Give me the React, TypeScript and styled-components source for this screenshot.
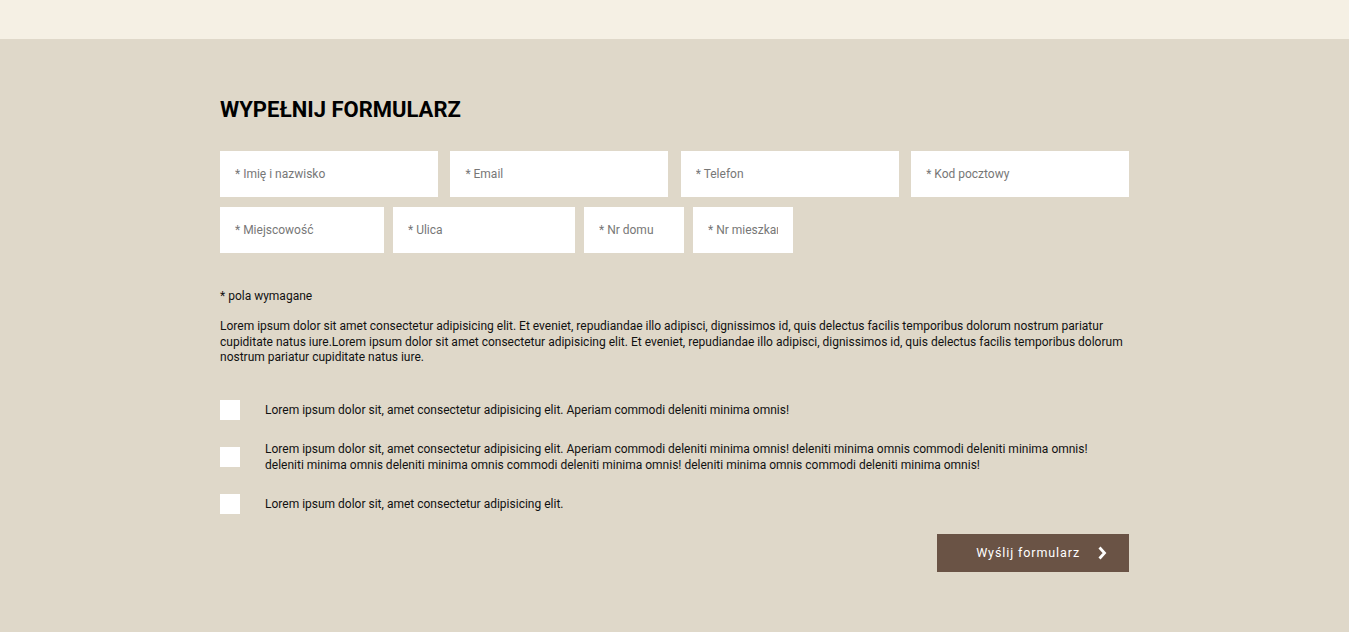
import styled, { createGlobalStyle } from "styled-components";

const GlobalStyle = createGlobalStyle`
	body {
		margin: 0;
		font-family: Roboto, "Liberation Sans", sans-serif;
		background-color: #dfd8c9;
		color: #111;
	}
	* {
		box-sizing: border-box;
	}
`;

const TopBar = styled.div`
	height: 39px;
	background-color: #f5f0e4;
`;

const Section = styled.section`
	background-color: #dfd8c9;
	min-height: 593px;
	padding-top: 58px;
`;

const Container = styled.form`
	width: 909px;
	margin: 0 auto;
`;

const Title = styled.h2`
	margin: 0 0 28px;
	font-size: 22px;
	font-weight: 700;
	line-height: 26px;
	color: #000;
`;

const Fields = styled.div<{ $cols: string; $gap: number }>`
	display: grid;
	grid-template-columns: ${props => props.$cols};
	column-gap: ${props => props.$gap}px;
	margin-bottom: 10px;
`;

const Input = styled.input`
	height: 46px;
	width: 100%;
	border: none;
	outline: none;
	background: #fff;
	padding: 0 15px;
	font-family: Roboto, "Liberation Sans", sans-serif;
	font-size: 12px;
	color: #333;
	&::placeholder {
		color: #777;
	}
`;

const Required = styled.p`
	margin: 35px 0 0;
	font-size: 12px;
	line-height: 16px;
`;

const Lead = styled.p`
	margin: 15px 0 0;
	font-size: 12px;
	line-height: 15.5px;
	padding-right: 4px;
`;

const Consents = styled.div`
	display: flex;
	flex-direction: column;
	gap: 21px;
	margin-top: 34px;
`;

const Consent = styled.label`
	display: flex;
	align-items: center;
	gap: 25px;
	font-size: 12px;
	line-height: 16px;
`;

const Box = styled.span`
	flex: 0 0 20px;
	width: 20px;
	height: 20px;
	background: #fff;
`;

const Actions = styled.div`
	display: flex;
	justify-content: flex-end;
	margin-top: 20px;
`;

const SubmitButton = styled.button`
	display: flex;
	align-items: center;
	justify-content: flex-end;
	gap: 17px;
	width: 192px;
	height: 38px;
	padding: 0 22px 0 0;
	border: none;
	background-color: #6a5345;
	color: #fff;
	font-family: Roboto, "Liberation Sans", sans-serif;
	font-size: 12.5px;
	font-weight: 400;
	letter-spacing: 0.9px;
	cursor: pointer;
`;

const consents = [
	"Lorem ipsum dolor sit, amet consectetur adipisicing elit. Aperiam commodi deleniti minima omnis!",
	"Lorem ipsum dolor sit, amet consectetur adipisicing elit. Aperiam commodi deleniti minima omnis! deleniti minima omnis commodi deleniti minima omnis! deleniti minima omnis deleniti minima omnis commodi deleniti minima omnis! deleniti minima omnis commodi deleniti minima omnis!",
	"Lorem ipsum dolor sit, amet consectetur adipisicing elit.",
];

function App() {
	return (
		<>
			<GlobalStyle />
			<TopBar />
			<Section>
				<Container onSubmit={e => e.preventDefault()}>
					<Title>WYPEŁNIJ FORMULARZ</Title>
					<Fields $cols="repeat(4, 1fr)" $gap={12.5}>
						<Input placeholder="* Imię i nazwisko" />
						<Input placeholder="* Email" />
						<Input placeholder="* Telefon" />
						<Input placeholder="* Kod pocztowy" />
					</Fields>
					<Fields $cols="164px 182px 100px 100px" $gap={9}>
						<Input placeholder="* Miejscowość" />
						<Input placeholder="* Ulica" />
						<Input placeholder="* Nr domu" />
						<Input placeholder="* Nr mieszkania" />
					</Fields>
					<Required>* pola wymagane</Required>
					<Lead>
						Lorem ipsum dolor sit amet consectetur adipisicing elit. Et eveniet, repudiandae illo adipisci, dignissimos id, quis delectus facilis temporibus dolorum nostrum pariatur
						cupiditate natus iure.Lorem ipsum dolor sit amet consectetur adipisicing elit. Et eveniet, repudiandae illo adipisci, dignissimos id, quis delectus facilis temporibus dolorum
						nostrum pariatur cupiditate natus iure.
					</Lead>
					<Consents>
						{consents.map((text, i) => (
							<Consent key={i}>
								<Box />
								<span>{text}</span>
							</Consent>
						))}
					</Consents>
					<Actions>
						<SubmitButton type="submit">
							Wyślij formularz
							<svg width="10" height="14" viewBox="0 0 10 14">
								<path d="M2.5 1.5 L7.5 7 L2.5 12.5" fill="none" stroke="#fff" strokeWidth="2.8" />
							</svg>
						</SubmitButton>
					</Actions>
				</Container>
			</Section>
		</>
	);
}

export default App;
